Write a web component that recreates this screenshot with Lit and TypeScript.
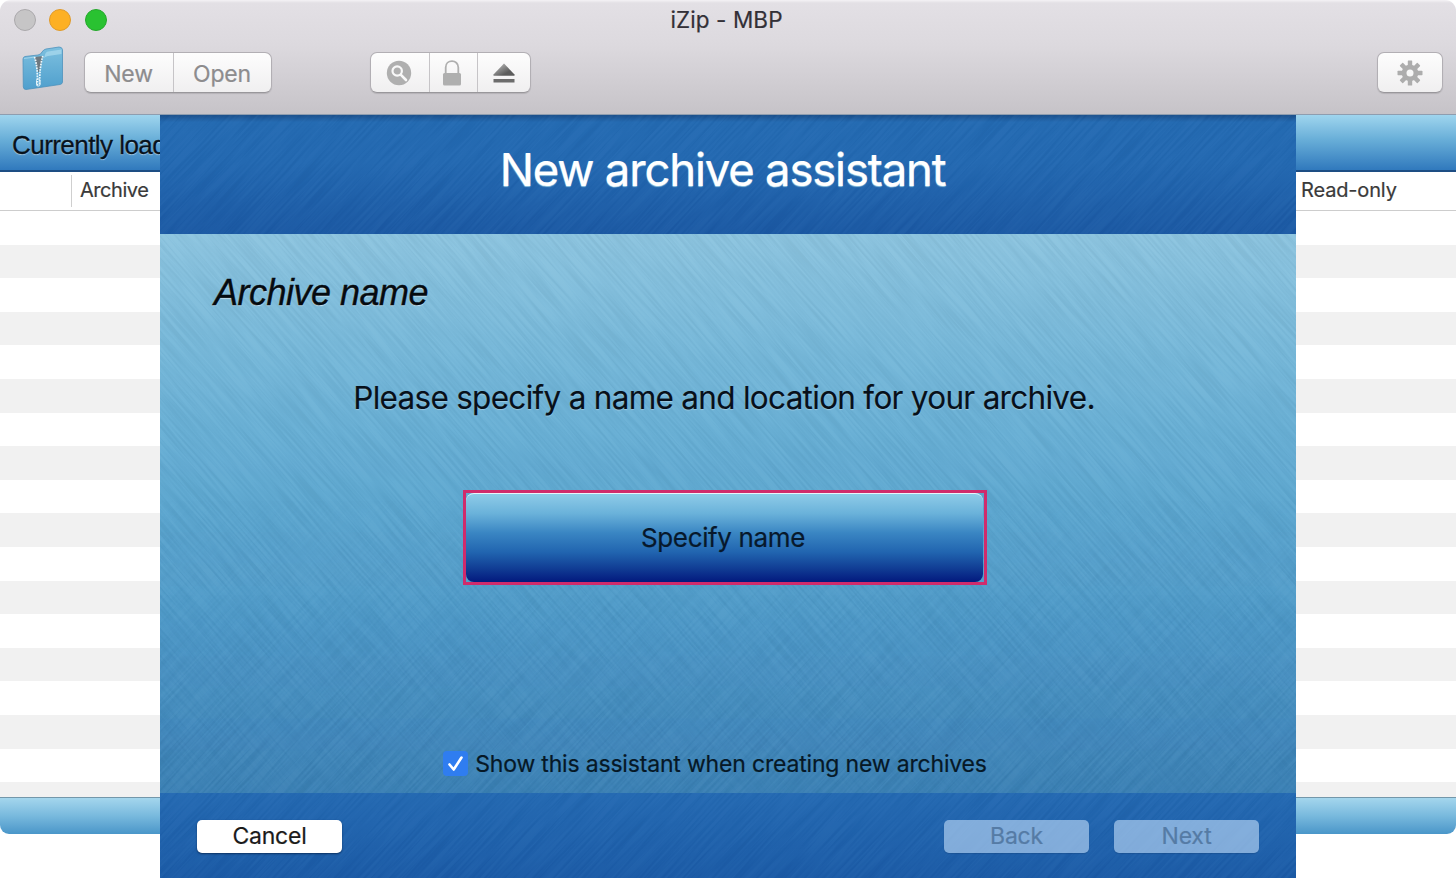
import { LitElement, html, css, svg } from "lit";
import { customElement } from "lit/decorators.js";

@customElement("brushed-texture")
class BrushedTexture extends LitElement {
  static styles = css`
    :host { display: block; position: absolute; inset: 0; overflow: hidden; pointer-events: none; }
    .sheet { position: absolute; left: 50%; top: 50%; width: 1500px; height: 1500px; margin: -750px 0 0 -750px; }
    .up { transform: rotate(-47deg); }
    .down { transform: rotate(49deg); }
    .upper { position: absolute; inset: 0; overflow: hidden; }
    :host([kind="cross"]) .rising { mask-image: linear-gradient(transparent 45%, #000 95%); }
    :host([kind="cross"]) .falling { mask-image: linear-gradient(#000 60%, rgba(0,0,0,.25)); }
    :host([kind="rise"]) .falling { display: none; }
    :host([kind="rise"]) .rising { opacity: .7; }
  `;
  private sheet(dir: string, seed: number) {
    return html`<svg class="sheet ${dir}" viewBox="0 0 1500 1500">${svg`
      <filter id="n" x="0" y="0" width="100%" height="100%" color-interpolation-filters="sRGB">
        <feTurbulence type="fractalNoise" baseFrequency="0.014 0.42" numOctaves="2" seed=${seed}></feTurbulence>
        <feColorMatrix values="3 0 0 0 -1  3 0 0 0 -0.9  3 0 0 0 -0.8  0 0 0 0 0.034"></feColorMatrix>
      </filter>
      <rect width="1500" height="1500" filter="url(#n)"></rect>`}</svg>`;
  }
  render() {
    return html`<div class="upper rising">${this.sheet("up", 4)}</div>
      <div class="upper falling">${this.sheet("down", 9)}</div>`;
  }
}

@customElement("app-root")
class AppRoot extends LitElement {
  static styles = css`
    :host { display: block; position: relative; width: 1456px; height: 878px; overflow: hidden; background: #fff;
      font-family: Inter, "Liberation Sans", sans-serif; color: #222; }
    * { box-sizing: border-box; }
    .window { display: flex; flex-direction: column; height: 834px; border-radius: 11px 11px 9px 9px; overflow: hidden; }
    .chrome { height: 115px; flex: none; background: linear-gradient(#f4f2f5 0, #e3e0e5 3px, #dcd9de 40%, #c6c3c8); border-bottom: 1px solid #8e9daf; }
    .titlebar { display: grid; grid-template-columns: 1fr auto 1fr; align-items: center; height: 40px; padding: 0 17px 0 14px; }
    .lights { display: flex; gap: 13.4px; }
    .light { width: 22px; height: 22px; border-radius: 50%; border: 1px solid #aaa8ab; background: #c6c5c6; }
    .light.amber { background: #fdb024; border-color: #df9a2b; }
    .light.green { background: #29c231; border-color: #25a72c; }
    .title { font-size: 22.5px; line-height: 40px; color: #333037; letter-spacing: .1px; -webkit-text-stroke: .2px; }
    .tools { display: flex; align-items: center; height: 65px; padding: 0 13px 0 21px; }
    .folder { width: 44px; height: 48px; margin: -7px 19px 0 0; }
    .group { display: flex; height: 41px; border: 1px solid #b2afb4; border-bottom-color: #99979b; border-radius: 7px; background: linear-gradient(#fdfdfd, #f0eff0); box-shadow: 0 1px 1px rgba(0,0,0,.12); overflow: hidden; }
    .cell { display: flex; align-items: center; justify-content: center; font-size: 23px; letter-spacing: -.2px; color: #8d8c8e; -webkit-text-stroke: .2px; padding-top: 2px; }
    .cell + .cell { border-left: 1px solid #c6c4c7; }
    .cell svg { margin-top: -2px; }
    .w-new { width: 88px; padding-right: 1px; } .w-open { width: 98px; padding-right: 1px; }
    .w-find { width: 58px; padding-right: 2px; } .w-lock { width: 48px; padding-right: 3px; } .w-eject { width: 53px; } .w-gear { width: 64px; }
    .icons { margin-left: 98px; }
    .settings { margin-left: auto; }
    .banner { height: 57px; flex: none; padding: 0 12px; background: linear-gradient(#9fd5ee, #68aed8 45%, #3079bd); border-bottom: 2px solid #1d4d83;
      font: 26px/61px "Liberation Sans", Arial, sans-serif; letter-spacing: -.55px; color: #07121c; -webkit-text-stroke: .3px; text-shadow: 0 1px 1px rgba(255,255,255,.5); white-space: nowrap; }
    .columns { display: flex; align-items: center; justify-content: space-between; height: 39px; flex: none; border-bottom: 1px solid #cdcdcd; font-size: 20px; color: #3a3a3a; -webkit-text-stroke: .2px; }
    .col-a { margin-left: 71px; border-left: 1px solid #cfcfcf; height: 32px; line-height: 30px; padding-left: 8px; letter-spacing: -.45px; }
    .col-r { width: 155px; line-height: 34px; letter-spacing: -.15px; margin-top: -2px; }
    .rows { flex: 1; background: repeating-linear-gradient(#fff 0 33.6px, #f1f1f1 33.6px 67.2px); }
    .status { height: 37px; flex: none; border-top: 1px solid #7397aa; background: linear-gradient(#a4d6ed, #78b9dd 50%, #4a96c9); }

    .assistant { position: absolute; left: 160px; top: 115px; width: 1136px; height: 763px; display: flex; flex-direction: column; }
    .part { position: relative; display: flex; }
    .part > :not(brushed-texture) { z-index: 1; }
    .head { height: 119px; justify-content: center; background: linear-gradient(#1b508c 0, #236ab2 7px, #2268b1 40%, #1b59a4); }
    .heading { margin: 0; font-size: 45.5px; font-weight: 400; line-height: 110px; color: #fff; -webkit-text-stroke: .2px; text-shadow: 0 1px 1px rgba(190,235,245,.7); letter-spacing: -1.2px; white-space: nowrap; padding-right: 11px; }
    .body { height: 559px; flex-direction: column; align-items: center; background: linear-gradient(#8cc4df, #68b0d5 35%, #4f9bca 66%, #3a80b5); }
    .step { align-self: flex-start; margin: 33px 0 0 54px; font: italic 36px/52px "Liberation Sans", Arial, sans-serif; letter-spacing: -.5px; color: #050b10; -webkit-text-stroke: .4px; text-shadow: 0 1px 1px rgba(255,255,255,.6); white-space: nowrap; }
    .message { margin-top: 54px; height: 50px; font-size: 31.5px; line-height: 50px; color: #07101a; padding-right: 8px; letter-spacing: -.71px; -webkit-text-stroke: .15px; text-shadow: 0 1px 1px rgba(255,255,255,.3); white-space: nowrap; }
    .ring { margin: 67px 6px 0 0; width: 524px; height: 95px; border: 3px solid #d02b6c; display: flex; }
    .specify { flex: 1; margin-right: 1px; border: 0; border-top: 1px solid #e8f5fb; border-radius: 8px; font: 26px/86px Inter, sans-serif; letter-spacing: -.35px; color: #07182b; -webkit-text-stroke: .2px; text-align: center; padding: 0 3px 0 0;
      background: linear-gradient(#8ecbe8 0, #6ab2da 22%, #3a86c3 44%, #2165b0 66%, #113e95 84%, #03197e 100%); }
    .option { display: flex; align-items: center; gap: 7px; margin: 160px 26px 0 0; height: 36px; font-size: 23px; letter-spacing: -.18px; color: #061826; -webkit-text-stroke: .2px; white-space: nowrap; }
    .opt-text { padding-top: 1px; }
    .check { width: 25px; height: 25px; border-radius: 4px; background: #2f7df0; display: block; }
    .foot { height: 85px; align-items: flex-start; gap: 25px; padding: 27px 37px 0; background: linear-gradient(#2369b2, #1b5ba7); }
    .btn { width: 145px; height: 33px; border: 0; padding: 0; border-radius: 5px; background: #fff; font: 23px/33px Inter, sans-serif; letter-spacing: -.2px; color: #1b1b1b; -webkit-text-stroke: .2px; text-align: center; box-shadow: 0 1px 2px rgba(0,20,50,.6); }
    .btn.off { background: rgba(180,211,243,.66); color: #557ba5; box-shadow: 0 1px 1px rgba(0,20,50,.15); }
    .spacer { flex: 1; margin-right: -25px; }
  `;

  render() {
    return html`
      <div class="window">
        <div class="chrome">
          <div class="titlebar">
            <div class="lights"><i class="light"></i><i class="light amber"></i><i class="light green"></i></div>
            <div class="title">iZip - MBP</div><span></span>
          </div>
          <div class="tools">
            <svg class="folder" viewBox="0 0 44 48">
              <defs><linearGradient id="f" x1="0" y1="0" x2="0" y2="1"><stop offset="0" stop-color="#7dc0df"></stop><stop offset="1" stop-color="#4f9fcd"></stop></linearGradient></defs>
              <path d="M2 14Q2 12 4 11.500L17 10Q20 9.500 21 7Q22.500 4.500 25 4L38 2Q41 2 41.500 4.500V37Q41.500 39 39 39.500L5 44.500Q2.500 44.500 2.300 42Z" fill="url(#f)" stroke="#4c92bd" stroke-width=".8"></path>
              <path d="M23.500 12Q24 7 27 6.500L40.500 4.500V9L27 11Q24.500 11.500 23 13Z" fill="#a9d9ed" opacity=".75"></path>
              <path d="M3 13.500L14 12" stroke="#a9d9ed" opacity=".8"></path>
              <path d="M13.500 12L22 11L18 27H17Z" fill="#6e7980"></path>
              <path d="M13.500 12Q17 22 16.300 41M21.800 11Q18.500 22 18.600 40" fill="none" stroke="#eef8fc" stroke-width="1.700" stroke-dasharray="1.700 1"></path>
              <rect x="15.500" y="34" width="3.500" height="7" rx="1.500" fill="none" stroke="#e3f2f8"></rect>
            </svg>
            <div class="group"><div class="cell w-new">New</div><div class="cell w-open">Open</div></div>
            <div class="group icons">
              <div class="cell w-find"><svg width="26" height="26" viewBox="0 0 26 26"><circle cx="13" cy="13" r="12.200" fill="#afafaf"></circle><circle cx="11.200" cy="11" r="4.700" fill="none" stroke="#f8f8f8" stroke-width="2.200"></circle><path d="M14.700 14.600L20 20" stroke="#f8f8f8" stroke-width="2.600" stroke-linecap="round"></path></svg></div>
              <div class="cell w-lock"><svg width="20" height="26" viewBox="0 0 20 26"><path d="M3.700 14V7.500C3.700 -1 16.300 -1 16.300 7.500V14" fill="none" stroke="#afafaf" stroke-width="1.800"></path><rect x="1" y="13" width="18" height="12.500" rx="1.500" fill="#afafaf"></rect></svg></div>
              <div class="cell w-eject"><svg width="22" height="22" viewBox="0 0 22 22"><defs><linearGradient id="e" x1="0" y1="0" x2="1" y2="1"><stop offset=".2" stop-color="#aaa"></stop><stop offset=".7" stop-color="#5c5c5c"></stop></linearGradient></defs><path d="M11 1.500L21.500 12.500V13.700H.5V12.500Z" fill="url(#e)"></path><path d="M.5 17H21.500V20.500H.5Z" fill="#6c6c6c"></path></svg></div>
            </div>
            <div class="group settings"><div class="cell w-gear">
              <svg width="26" height="26" viewBox="-13 -13 26 26"><g fill="#adadad">${[0, 45, 90, 135].map((a) => svg`<rect x="-2.200" y="-12.500" width="4.400" height="25" rx=".6" transform="rotate(${a})"></rect>`)}<circle r="8.300"></circle></g><circle r="3.500" fill="#f7f7f7"></circle></svg>
            </div></div>
          </div>
        </div>
        <div class="banner">Currently loaded archives</div>
        <div class="columns"><div class="col-a">Archive</div><div class="col-r">Read-only</div></div>
        <div class="rows"></div>
        <div class="status"></div>
      </div>
      <div class="assistant">
        <div class="part head"><brushed-texture kind="rise"></brushed-texture><h1 class="heading">New archive assistant</h1></div>
        <div class="part body"><brushed-texture kind="cross"></brushed-texture>
          <div class="step">Archive name</div>
          <div class="message">Please specify a name and location for your archive.</div>
          <div class="ring"><button class="specify">Specify name</button></div>
          <label class="option"><svg class="check" viewBox="0 0 25 25"><path d="M6.500 13.500L10.700 18.500L18.500 6.500" fill="none" stroke="#fff" stroke-width="2.600" stroke-linecap="round" stroke-linejoin="round"></path></svg><span class="opt-text">Show this assistant when creating new archives</span></label>
        </div>
        <div class="part foot"><brushed-texture kind="rise"></brushed-texture>
          <button class="btn">Cancel</button><span class="spacer"></span><button class="btn off">Back</button><button class="btn off">Next</button>
        </div>
      </div>`;
  }
}
